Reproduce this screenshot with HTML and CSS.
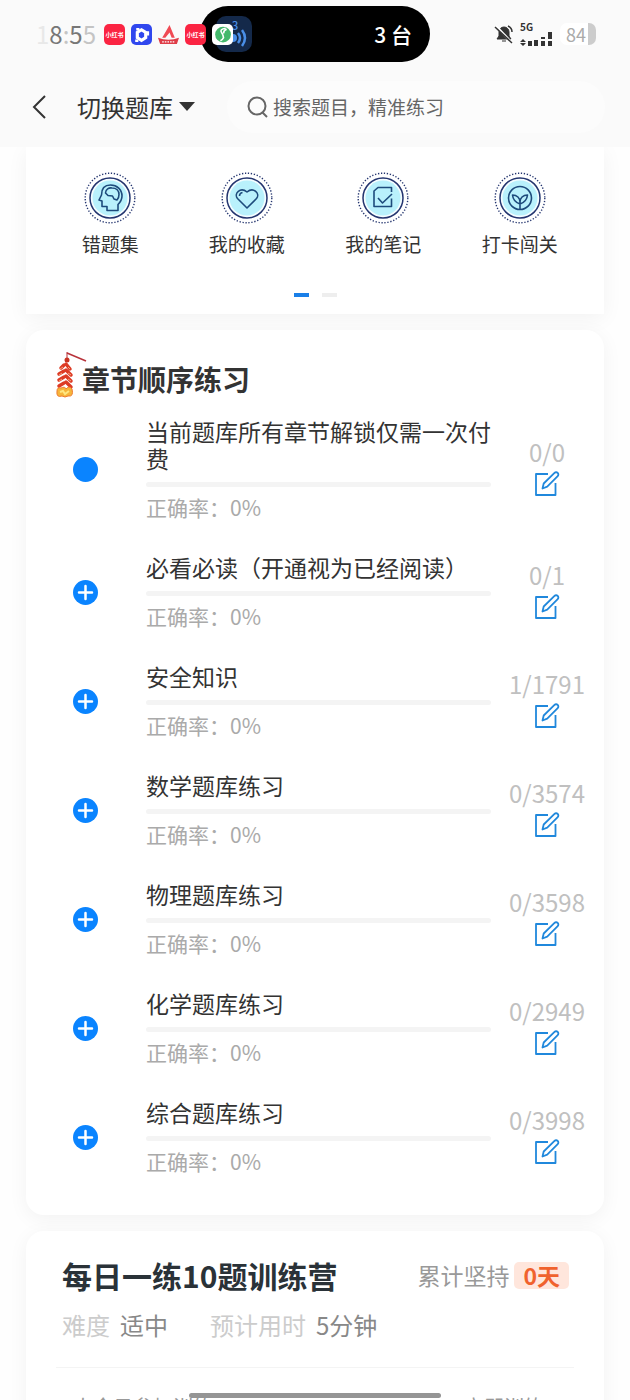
FILE: index.html
```html
<!DOCTYPE html>
<html lang="zh-CN">
<head>
    <meta charset="UTF-8">
    <meta name="viewport" content="width=device-width, initial-scale=1.0">
    <title>题库练习</title>
    <link rel="stylesheet" href="styles.css">
</head>
<body>

<svg class="defs" aria-hidden="true">
    <symbol id="ring" viewBox="0 0 52 52">
        <circle cx="26" cy="26" r="24.8" fill="none" stroke="#24356f" stroke-width="1.4" stroke-dasharray="1.3 1.7"/>
        <circle cx="26" cy="26" r="20" fill="#f4fdff" stroke="#24356f" stroke-width="1.5"/>
        <circle cx="26" cy="26" r="17.5" fill="#b9f1fc" stroke="none"/>
    </symbol>
    <symbol id="edit" viewBox="0 0 26 26">
        <path d="M14 3H2v21h19.500V12"/>
        <path d="M8.500 17.500l1.200-5L20.500 1.900a2.200 2.200 0 0 1 3.200 3.200L13.200 15.600z"/>
    </symbol>
    <symbol id="plus" viewBox="0 0 25 25">
        <path d="M12.500 6v13M6 12.500h13"/>
    </symbol>
</svg>

<div class="status-bar">
    <div class="status-left">
        <span class="time"><i class="faint">1</i>8<i class="soft">:</i>5<i class="soft">5</i></span>
        <span class="app red">小红书</span>
        <span class="app blue">
            <svg viewBox="0 0 20 20"><path d="M10 5.500l4 2.500v5l-4 2.500-4-2.500V8z" fill="none" stroke="#fff" stroke-width="3"/><path d="M5 5h3M16 7v4M7 16h-3" stroke="#fff" stroke-width="2.500"/></svg>
        </span>
        <span class="app">
            <svg viewBox="0 0 20 20"><path d="M4 13l7-12 5 12h-3l-2-5-4 5z" fill="#f04a54"/><path d="M0 13q10 4 20 0l-2 6H2z" fill="#df3d48"/><path d="M4 17h12" stroke="#fff" stroke-dasharray="1.500 1"/></svg>
        </span>
        <span class="app red">小红书</span>
        <span class="app white">
            <svg viewBox="0 0 20 20"><circle cx="10.500" cy="10" r="7.500" fill="#43b86b"/><path d="M13 4q-6 1-4 4t2 5q-1 2-3 3M14 5q-3 1-3 4" fill="none" stroke="#fff" stroke-width="1.500"/></svg>
        </span>
    </div>
    <div class="island">
        <span class="cast">
            <svg viewBox="0 0 36 36"><circle cx="17" cy="22" r="4"/><path d="M22 17q4 5 0 10M26 14q6 8 0 16" fill="none" stroke="#4a8fe8" stroke-width="2.500"/><text x="16" y="14">3</text></svg>
        </span>
        <span>3 台</span>
    </div>
    <div class="status-right">
        <svg class="mute" viewBox="0 0 20 20"><path d="M3 15h14l-2-3V8a5 5 0 0 0-10 0v4zM8 17h4" fill="#333" stroke="#333"/><path d="M2 2l16 17" stroke="#fff" stroke-width="2.500"/><path d="M1 3l17 16M14 2q4 2 4 6" fill="none" stroke="#333" stroke-width="1.500"/></svg>
        <div class="signal">
            <span>5G</span>
            <svg viewBox="0 0 34 14"><path d="M0 10l3-3 3 3zM0 11l3 3 3-3zM8 9h4v5H8zM14 8h4v6h-4zM21 5h4v9h-4zM28 0h4v14h-4z"/><path d="M20 8h14" stroke="#fafafa" stroke-width="2"/></svg>
        </div>
        <span class="battery">84</span>
    </div>
</div>

<header class="header">
    <button class="back" aria-label="返回">
        <svg viewBox="0 0 14 24"><path d="M13 1L2 12l11 11"/></svg>
    </button>
    <button class="switch">切换题库<span class="caret"></span></button>
    <form class="search">
        <svg viewBox="0 0 22 22"><circle cx="10" cy="10" r="8.500"/><path d="M15.500 16.500L20 21"/></svg>
        <input type="search" aria-label="搜索题目" placeholder="搜索题目，精准练习">
    </form>
</header>

<main>
    <section class="card tools">
        <nav class="tool-list">
            <a href="#wrong">
                <svg viewBox="0 0 52 52"><use href="#ring"/><path d="M23 38.500v-4h-5v-5.500l-3-1 2.500-5C17.500 16 21 13 26.500 13 33 13 38 17.500 38 24c0 4-2 6.500-4 8.500v6z"/><path d="M21.500 21c0-4 3.500-5.500 6.500-5 4.500 0 7 3 7 6.500s-1 4.500-2 5.500l-3-1-1.500-3-4.500-.5z"/></svg>
                错题集
            </a>
            <a href="#favorite">
                <svg viewBox="0 0 52 52"><use href="#ring"/><path d="M26 36L16.500 26.500c-4-5 3-12 9.500-6.500 6.500-5.500 13.500 1.500 9.500 6.500z"/><path d="M18.500 24q0-3 3-3.500"/></svg>
                我的收藏
            </a>
            <a href="#note">
                <svg viewBox="0 0 52 52"><use href="#ring"/><path d="M34.500 20v-4.500H21L17 19v15.500h17.500v-8"/><path d="M21 26l4.500 5L35 22"/></svg>
                我的笔记
            </a>
            <a href="#checkin">
                <svg viewBox="0 0 52 52"><use href="#ring"/><circle cx="26" cy="26" r="11.500"/><path d="M26 37v-7c0-4-3-7-7.500-7 .5 5 3 7.500 7.500 9 4.500-1.500 7-4 7.500-9-4.500 0-7.500 3-7.500 7"/></svg>
                打卡闯关
            </a>
        </nav>
        <div class="dots"><span class="on"></span><span></span></div>
    </section>

    <section class="card chapters">
        <h2>
            <svg class="cracker" viewBox="0 0 34 50">
                <path d="M13 3l19 8" stroke="#b8323a" stroke-width="1.500"/>
                <path d="M13 2v8" stroke="#b8323a"/>
                <circle cx="13" cy="10" r="2.500" fill="#c93322"/>
                <path d="M10 15l-3 3M10 21l-5 3M10 27l-5 3M10 33l-5 3M12 14l4 5M12 20l5 5M12 26l5 5M12 32l5 5" stroke="#dd3b25" stroke-width="3.500" stroke-linecap="round"/>
                <path d="M6 19l3-2M5 25l3-2M5 31l3-2M16 19l-2-2M17 25l-3-2M17 31l-3-2" stroke="#f5a078" stroke-width="1"/>
                <path d="M3 41q0-4 4-3 4-2 5 1 3-4 6 0 2 8-4 7-3 2-6 0-6 2-5-5z" fill="#f6b53a" stroke="#ef7c30"/>
                <path d="M6 42l3-1 2 3 4-3" fill="none" stroke="#ffe680" stroke-width="2"/>
            </svg>章节顺序练习
        </h2>
        <ul class="chapter-list">
            <li>
                <button class="toggle" aria-label="章节"></button>
                <div class="info">
                    <h3>当前题库所有章节解锁仅需一次付费</h3>
                    <div class="bar"></div>
                    <p>正确率：0%</p>
                </div>
                <div class="count">
                    <span>0/0</span>
                    <button class="edit" aria-label="练习"><svg><use href="#edit"/></svg></button>
                </div>
            </li>
            <li>
                <button class="toggle" aria-label="展开"><svg><use href="#plus"/></svg></button>
                <div class="info">
                    <h3>必看必读（开通视为已经阅读）</h3>
                    <div class="bar"></div>
                    <p>正确率：0%</p>
                </div>
                <div class="count">
                    <span>0/1</span>
                    <button class="edit" aria-label="练习"><svg><use href="#edit"/></svg></button>
                </div>
            </li>
            <li>
                <button class="toggle" aria-label="展开"><svg><use href="#plus"/></svg></button>
                <div class="info">
                    <h3>安全知识</h3>
                    <div class="bar"></div>
                    <p>正确率：0%</p>
                </div>
                <div class="count">
                    <span>1/1791</span>
                    <button class="edit" aria-label="练习"><svg><use href="#edit"/></svg></button>
                </div>
            </li>
            <li>
                <button class="toggle" aria-label="展开"><svg><use href="#plus"/></svg></button>
                <div class="info">
                    <h3>数学题库练习</h3>
                    <div class="bar"></div>
                    <p>正确率：0%</p>
                </div>
                <div class="count">
                    <span>0/3574</span>
                    <button class="edit" aria-label="练习"><svg><use href="#edit"/></svg></button>
                </div>
            </li>
            <li>
                <button class="toggle" aria-label="展开"><svg><use href="#plus"/></svg></button>
                <div class="info">
                    <h3>物理题库练习</h3>
                    <div class="bar"></div>
                    <p>正确率：0%</p>
                </div>
                <div class="count">
                    <span>0/3598</span>
                    <button class="edit" aria-label="练习"><svg><use href="#edit"/></svg></button>
                </div>
            </li>
            <li>
                <button class="toggle" aria-label="展开"><svg><use href="#plus"/></svg></button>
                <div class="info">
                    <h3>化学题库练习</h3>
                    <div class="bar"></div>
                    <p>正确率：0%</p>
                </div>
                <div class="count">
                    <span>0/2949</span>
                    <button class="edit" aria-label="练习"><svg><use href="#edit"/></svg></button>
                </div>
            </li>
            <li>
                <button class="toggle" aria-label="展开"><svg><use href="#plus"/></svg></button>
                <div class="info">
                    <h3>综合题库练习</h3>
                    <div class="bar"></div>
                    <p>正确率：0%</p>
                </div>
                <div class="count">
                    <span>0/3998</span>
                    <button class="edit" aria-label="练习"><svg><use href="#edit"/></svg></button>
                </div>
            </li>
        </ul>
    </section>

    <section class="card daily">
        <div class="daily-head">
            <h2>每日一练10题训练营</h2>
            <div class="streak">累计坚持<b>0天</b></div>
        </div>
        <div class="meta">
            <span>难度</span><em>适中</em>
            <span>预计用时</span><em>5分钟</em>
        </div>
        <div class="daily-foot">
            <span>1人今日参加训练</span>
            <a href="#train">立即训练</a>
        </div>
    </section>
</main>

<div class="home-bar"></div>

</body>
</html>
```
FILE: styles.css
```css
* {
    box-sizing: border-box;
}

body {
    margin: 0;
    height: 100vh;
    display: flex;
    flex-direction: column;
    overflow: hidden;
    background: #fefefe;
    color: #333;
    font-family: "Noto Sans CJK SC", sans-serif;
}

h2, h3, p, ul {
    margin: 0;
    padding: 0;
    font-weight: normal;
}

button {
    padding: 0;
    border: none;
    background: none;
    color: inherit;
    font-family: inherit;
    cursor: pointer;
}

svg {
    display: block;
}

.defs {
    position: absolute;
    width: 0;
    height: 0;
}

/* status bar */
.status-bar {
    position: relative;
    flex: none;
    display: flex;
    justify-content: space-between;
    align-items: center;
    height: 68px;
    padding: 0 34px 0 36px;
    background: #fafafa;
}

.status-left {
    position: relative;
    z-index: 1;
    display: flex;
    align-items: center;
    gap: 6px;
}

.time {
    width: 62px;
    font-size: 24px;
    line-height: 24px;
    color: #777;
}

.time i {
    font-style: normal;
}

.time .faint {
    color: #e8e8e8;
}

.time .soft {
    color: #c4c4c4;
}

.app {
    width: 21px;
    height: 21px;
    border-radius: 5px;
    color: #fff;
    font-size: 6px;
    font-weight: bold;
    line-height: 21px;
    text-align: center;
    white-space: nowrap;
}

.app.red {
    background: #fb2442;
}

.app.blue {
    background: #3047ee;
}

.app.white {
    background: #fff;
}

.island {
    position: absolute;
    top: 6px;
    left: calc(50% - 115px);
    width: 230px;
    height: 56px;
    display: flex;
    justify-content: space-between;
    align-items: center;
    padding: 0 18px 0 16px;
    border-radius: 28px;
    background: #000;
    color: #fff;
    font-size: 21px;
    font-weight: 500;
}

.cast {
    width: 36px;
    height: 36px;
    border-radius: 10px;
    background: #14294a;
    fill: #4a8fe8;
    font-size: 11px;
}

.status-right {
    display: flex;
    align-items: center;
    gap: 6px;
}

.mute {
    width: 20px;
    height: 20px;
}

.signal {
    width: 34px;
    fill: #333;
    font-size: 10px;
    font-weight: bold;
    line-height: 10px;
}

.signal span {
    display: block;
}

.signal svg {
    width: 34px;
    height: 14px;
}

.battery {
    width: 36px;
    height: 22px;
    padding-left: 6px;
    border-right: 8px solid #ccc;
    border-radius: 7px;
    background: #fff;
    color: #aaa;
    font-size: 18px;
    line-height: 22px;
}

/* header */
.header {
    flex: none;
    display: flex;
    align-items: center;
    height: 79px;
    padding: 0 25px 2px 32px;
    background: #fafafa;
}

.back svg {
    width: 14px;
    height: 24px;
    fill: none;
    stroke: #333;
    stroke-width: 2;
}

.switch {
    display: flex;
    align-items: center;
    gap: 6px;
    margin: 0 32px 0 31px;
    font-size: 24px;
    line-height: 32px;
}

.caret {
    border: 8px solid transparent;
    border-top: 9px solid #333;
    border-bottom: none;
}

.search {
    flex: 1;
    display: flex;
    align-items: center;
    gap: 4px;
    height: 52px;
    padding: 0 20px;
    border-radius: 26px;
    background: #fcfcfc;
}

.search svg {
    width: 22px;
    height: 22px;
    fill: none;
    stroke: #666;
    stroke-width: 2;
}

.search input {
    flex: 1;
    min-width: 0;
    padding: 0;
    border: none;
    outline: none;
    background: none;
    font-family: inherit;
    font-size: 19px;
}

.search input::placeholder {
    color: #666;
}

/* cards */
main {
    flex: 1;
    min-height: 0;
    overflow: hidden;
    padding: 0 26px;
}

.card {
    margin-bottom: 16px;
    border-radius: 18px;
    background: #fff;
    box-shadow: 0 4px 20px rgba(0, 0, 0, 0.05);
}

.tools {
    padding: 25px 16px 17px;
    border-radius: 0;
}

.tool-list {
    display: grid;
    grid-template-columns: repeat(4, 1fr);
}

.tool-list a {
    display: flex;
    flex-direction: column;
    align-items: center;
    gap: 7px;
    color: #333;
    font-size: 19px;
    line-height: 26px;
    text-decoration: none;
}

.tool-list svg {
    width: 52px;
    height: 52px;
    fill: none;
    stroke: #1d4b7c;
    stroke-width: 1.6;
    stroke-linejoin: round;
}

.dots {
    display: flex;
    justify-content: center;
    gap: 13px;
    margin-top: 36px;
}

.dots span {
    width: 15px;
    height: 4px;
    background: #eee;
}

.dots .on {
    background: #1a7fe8;
}

/* chapters */
.chapters {
    padding: 20px 0 40px;
}

.chapters h2 {
    display: flex;
    align-items: flex-end;
    padding-left: 28px;
    margin-bottom: 18px;
    font-size: 28px;
    font-weight: bold;
    line-height: 42px;
}

.cracker {
    width: 34px;
    height: 50px;
    margin-right: -6px;
    fill: none;
}

.chapter-list {
    display: grid;
    gap: 33px;
    list-style: none;
}

.chapter-list li {
    display: grid;
    grid-template-columns: 73px 1fr 84px;
    align-items: center;
    padding: 0 15px 0 47px;
}

.toggle {
    width: 25px;
    height: 25px;
    border-radius: 50%;
    background: #0a84ff;
}

.toggle svg {
    width: 25px;
    height: 25px;
    stroke: #fff;
    stroke-width: 2.5;
    stroke-linecap: round;
}

.info {
    padding-right: 14px;
}

.info h3 {
    font-size: 23px;
    line-height: 27px;
}

.info p {
    color: #aaa;
    font-size: 21px;
    line-height: 28px;
}

.bar {
    height: 5px;
    margin: 10px 0 6px;
    border-radius: 3px;
    background: #f4f4f4;
}

.count {
    display: flex;
    flex-direction: column;
    align-items: center;
    gap: 5px;
    padding-bottom: 4px;
    color: #c0c0c0;
    font-size: 24px;
    line-height: 28px;
}

.edit svg {
    width: 26px;
    height: 26px;
    fill: none;
    stroke: #2088dc;
    stroke-width: 1.8;
    stroke-linejoin: round;
}

/* daily training */
.daily {
    padding: 24px 30px 0;
}

.daily-head {
    display: flex;
    justify-content: space-between;
    align-items: center;
    padding: 0 5px 0 6px;
}

.daily h2 {
    color: #2a3238;
    font-size: 30px;
    font-weight: bold;
    line-height: 40px;
}

.streak {
    display: flex;
    align-items: center;
    gap: 5px;
    color: #999;
    font-size: 23px;
    line-height: 27px;
}

.streak b {
    padding: 0 9px;
    border-radius: 5px;
    background: #ffe6dc;
    color: #f0622d;
}

.meta {
    display: flex;
    margin-top: 14px;
    padding: 0 6px 26px;
    border-bottom: 1px solid #f4f4f4;
    color: #ccc;
    font-size: 24px;
    line-height: 32px;
}

.meta em {
    margin: 0 42px 0 10px;
    color: #888;
    font-style: normal;
}

.daily-foot {
    display: flex;
    justify-content: space-between;
    padding: 26px 30px 20px 6px;
    color: #999;
    font-size: 20px;
    line-height: 26px;
}

.daily-foot a {
    color: inherit;
    text-decoration: none;
}

.home-bar {
    position: fixed;
    bottom: 2px;
    left: 30%;
    right: 30%;
    height: 5px;
    border-radius: 3px;
    background: #959595;
}
```
